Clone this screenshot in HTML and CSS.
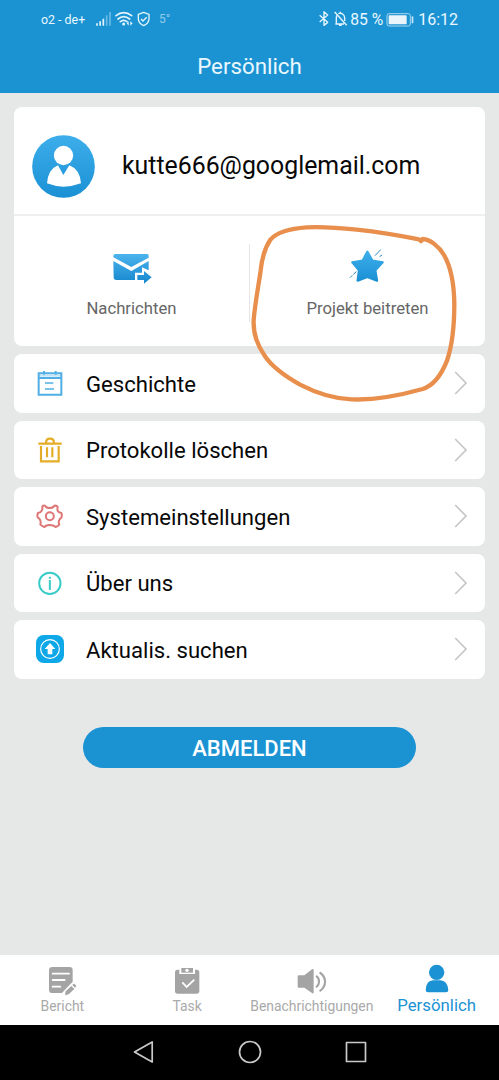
FILE: index.html
```html
<!DOCTYPE html>
<html lang="de">
<head>
<meta charset="utf-8">
<title>Persönlich</title>
<link rel="stylesheet" href="styles.css">
</head>
<body>
<div class="screen">
  <header class="header">
    <div class="status">
      <div class="status-left">
        <span class="carrier">o2 - de+</span>
        <svg class="status-icons" viewBox="285 30 168 54" width="56" height="18" fill="none" stroke="#e3f4fc">
          <g stroke-width="5"><path d="M291 70v7M300.500 64v13M310 56v21"/><path d="M320 46v31M330 36v41" opacity=".4"/></g>
          <g stroke-width="5" stroke-linecap="round"><path d="M348 47Q371 29 395 47M354 57Q371 43 389 57M361 65Q371 57 381 65"/></g>
          <circle cx="371" cy="72" r="4.500" fill="#e3f4fc" stroke="none"/>
          <path d="M386 64l-6 6 6 7zM391 64l7 6-7 7z" fill="#e3f4fc" stroke="none"/>
          <path d="M431 37L447 43V58Q445 71 431 77Q417 71 415 58V43Z" stroke-width="4" stroke-linejoin="round"/>
          <path d="M423 57l6 6 11-11" stroke-width="4"/>
        </svg>
        <span class="temp">5°</span>
      </div>
      <div class="status-right">
        <svg class="bt" viewBox="210 30 90 54" width="30" height="18" fill="none" stroke="#e3f4fc" stroke-width="4.200" stroke-linejoin="round">
          <path d="M215 46L239 67L228 76V35L239 45L215 66"/>
          <path d="M260 36L296 76M262 72H288M265 72V53Q265 49 267 46M271 41Q277 38 284 42Q290 46 290 54V63M277 35V38M273 76H281"/>
        </svg>
        <span class="percent">85 %</span>
        <svg class="battery" viewBox="415 33 84 45" width="28" height="15">
          <rect x="418" y="38" width="70" height="37" rx="6" fill="none" stroke="#a9d6ef" stroke-width="3"/>
          <rect x="423" y="43" width="54" height="27" rx="2" fill="#e9f5fb"/>
          <rect x="492" y="46" width="5" height="21" rx="2" fill="#c6e5f5"/>
        </svg>
        <span class="clock">16:12</span>
      </div>
    </div>
    <h1 class="title">Persönlich</h1>
  </header>

  <main class="content">
    <section class="card profile">
      <div class="account">
        <svg class="avatar" viewBox="96 108 189 189" width="63" height="63">
          <defs><linearGradient id="blue" x1="0" y1="0" x2="0" y2="1"><stop offset="0" stop-color="#3daeeb"/><stop offset="1" stop-color="#1a90d4"/></linearGradient></defs>
          <circle cx="190.500" cy="202.500" r="94" fill="url(#blue)"/>
          <circle cx="190.500" cy="169.500" r="29" fill="#fff"/>
          <path d="M174 199L190 228L208 199Q240 211 243 253Q190 273 141 253Q144 211 174 199Z" fill="#fff"/>
        </svg>
        <span class="email">kutte666@googlemail.com</span>
      </div>
      <div class="actions">
        <div class="action">
          <svg viewBox="333 453 126 102" width="42" height="34">
            <defs><linearGradient id="mail" gradientUnits="userSpaceOnUse" x1="0" y1="460" x2="0" y2="550"><stop offset="0" stop-color="#4db5ee"/><stop offset="1" stop-color="#1687ce"/></linearGradient></defs>
            <g fill="url(#mail)">
              <path d="M346 462H442Q446 462 446 467V473L394 501L340 472V467Q341 462 346 462Z"/>
              <path d="M340 483L394 513L446 483V511L426 502V518H405V540H349Q341 540 341 532Z"/>
              <path d="M412 525H432V513L455 532L432 551V540H412Z"/>
            </g>
          </svg>
          <span class="action-label">Nachrichten</span>
        </div>
        <div class="action">
          <svg viewBox="320 119 126 102" width="42" height="34" overflow="visible">
            <path d="M381 121L396 148L427 153L405 177L410 208L381 197L352 208L356 177L336 153L367 148Z" fill="url(#blue)" stroke="url(#blue)" stroke-width="7" stroke-linejoin="round"/>
            <path d="M404 133L421 115M418 136L425 131M329 199L336 192M339 189L348 181" stroke="#2b86b9" stroke-width="3"/>
          </svg>
          <span class="action-label">Projekt beitreten</span>
        </div>
      </div>
    </section>

    <div class="card row">
      <svg class="row-icon" viewBox="105 85 90 90" width="30" height="30" fill="none" stroke="#50afe5" stroke-width="6">
        <path d="M116 101H184V165H116ZM116 115H184M132 94V105M167 94V105"/><path d="M135 130H160M135 148H162" stroke-width="5"/><path d="M116 108H184" stroke-opacity=".35"/>
      </svg>
      <span class="row-label">Geschichte</span>
      <svg class="chevron" viewBox="0 0 14 24" width="14" height="24"><path d="M1.200 1L12 12L1.200 23"/></svg>
    </div>
    <div class="card row">
      <svg class="row-icon" viewBox="105 285 90 90" width="30" height="30" fill="none" stroke="#e5ad27" stroke-width="6.500">
        <path d="M115 311H185M123 318V364H176V318M141 322V352M157 322V352M138 309Q138 296 150 296Q162 296 162 309"/>
      </svg>
      <span class="row-label">Protokolle löschen</span>
      <svg class="chevron" viewBox="0 0 14 24" width="14" height="24"><path d="M1.200 1L12 12L1.200 23"/></svg>
    </div>
    <div class="card row">
      <svg class="row-icon" viewBox="105 -26 90 90" width="30" height="30" fill="none" stroke="#df7676" stroke-width="6" stroke-linejoin="round">
        <path d="M127 -10Q130 -13 135 -12Q139 -5 149 -5Q159 -5 163 -12Q168 -13 173 -9Q171 1 174 5Q177 9 184 10Q187 17 184 24Q178 28 177 33Q175 39 178 45Q173 51 167 52Q161 46 149 46Q138 46 133 52Q126 50 121 45Q123 37 121 32Q119 26 113 23Q111 17 114 10Q122 8 125 3Q128 -2 127 -10Z"/><circle cx="149.500" cy="20" r="12"/>
      </svg>
      <span class="row-label">Systemeinstellungen</span>
      <svg class="chevron" viewBox="0 0 14 24" width="14" height="24"><path d="M1.200 1L12 12L1.200 23"/></svg>
    </div>
    <div class="card row">
      <svg class="row-icon" viewBox="105 174 90 90" width="30" height="30" fill="none" stroke="#38cbc8" stroke-width="6">
        <circle cx="149.500" cy="220" r="32"/><path d="M149.500 200V206M149.500 210V240"/>
      </svg>
      <span class="row-label">Über uns</span>
      <svg class="chevron" viewBox="0 0 14 24" width="14" height="24"><path d="M1.200 1L12 12L1.200 23"/></svg>
    </div>
    <div class="card row">
      <svg class="row-icon" viewBox="105 373 90 90" width="30" height="30">
        <rect x="108" y="376" width="84" height="84" rx="23" fill="#0ea8e9"/>
        <circle cx="150" cy="418" r="28" fill="none" stroke="#fff" stroke-width="3.500"/>
        <path d="M150 400L166 418H157V434H143V418H134Z" fill="#fff"/>
      </svg>
      <span class="row-label">Aktualis. suchen</span>
      <svg class="chevron" viewBox="0 0 14 24" width="14" height="24"><path d="M1.200 1L12 12L1.200 23"/></svg>
    </div>

    <button class="logout">ABMELDEN</button>

    <svg class="marker" viewBox="0 0 777 600" width="259" height="200">
      <path d="M543 93L537 88Q440 69 350 59Q260 49 200 52Q118 58 92 88Q68 123 62 181C56 225 45 280 41 330C39 370 51 405 75 439C100 476 139 501 180 524C238 554 290 567 335 568C400 571 480 556 548 537C577 528 602 500 621 452C639 400 643 340 643 280C642 220 632 170 612 135C597 109 570 88 548 87Z"/>
    </svg>
  </main>

  <nav class="tabs">
    <div class="tab">
      <svg viewBox="141 75 96 96" width="32" height="32">
        <path d="M160 81H212Q221 81 221 91V126Q216 130 205 142L189 159H160Q150 159 150 149V91Q150 81 160 81Z" fill="#a4a4a4"/>
        <path d="M161 101H210M161 120H197M161 140H184" stroke="#fff" stroke-width="5.500" stroke-linecap="round"/>
        <path d="M198 166L200 154L217 138L226 147L209 163ZM220 135L224 131Q229 132 232 138L228 143Z" fill="#a4a4a4"/>
      </svg>
      <span>Bericht</span>
    </div>
    <div class="tab">
      <svg viewBox="513 75 96 96" width="32" height="32">
        <path d="M533 89H538V102H585V89H590Q598 89 598 97V153Q598 161 590 161H533Q525 161 525 153V97Q525 89 533 89Z" fill="#a4a4a4"/>
        <path d="M544 84H579V98H544Z" fill="#a4a4a4"/><circle cx="561" cy="91" r="5" fill="#fff"/>
        <path d="M547 127L560 141L583 119" fill="none" stroke="#fff" stroke-width="5.500"/>
      </svg>
      <span>Task</span>
    </div>
    <div class="tab">
      <svg viewBox="141 75 96 96" width="32" height="32">
        <path d="M149 106H166L190 87Q194 86 194 91V157Q194 162 190 160L166 143H149Q146 143 146 140V109Q146 106 149 106Z" fill="#a4a4a4"/>
        <path d="M203 109Q210 114 210 125Q210 135 203 140M214 99Q228 109 228 125Q228 141 214 152" fill="none" stroke="#a4a4a4" stroke-width="6.500" stroke-linecap="round"/>
      </svg>
      <span>Benachrichtigungen</span>
    </div>
    <div class="tab active">
      <svg viewBox="514 69 96 96" width="32" height="32" fill="#1a92d3">
        <circle cx="561" cy="97" r="23"/><path d="M528 150Q530 122 550 121H572Q593 122 596 150Q596 157 589 157H535Q528 157 528 150Z"/>
      </svg>
      <span>Persönlich</span>
    </div>
  </nav>

  <footer class="sysnav">
    <svg viewBox="0 0 22 24" width="22" height="24"><path d="M19.200 2V22L1.500 12Z"/></svg>
    <svg viewBox="0 0 24 24" width="24" height="24"><circle cx="12" cy="12" r="10.500"/></svg>
    <svg viewBox="0 0 22 24" width="22" height="24"><rect x="1.500" y="2.500" width="19" height="19"/></svg>
  </footer>
</div>
</body>
</html>
```
FILE: styles.css
```css
* { box-sizing: border-box; }
body { margin: 0; font-family: Roboto, sans-serif; }
svg { display: block; flex: none; }
.screen { width: 499px; height: 1080px; display: flex; flex-direction: column; background: #e6e8e8; overflow: hidden; }
.header { height: 92.5px; flex: none; background: #1b93d3; color: #e9f7fe; }
.status { height: 38px; padding: 0 41px; display: flex; justify-content: space-between; align-items: center; }
.status-left, .status-right { display: flex; align-items: center; white-space: nowrap; }
.carrier { font-size: 12.4px; width: 54px; }
.temp { font-size: 12px; margin-left: 8px; opacity: .55; }
.percent { font-size: 15.7px; width: 36px; margin-left: 2px; }
.clock { font-size: 16px; margin-left: 4px; }
.title { margin: 14px 0 0; font-size: 22.3px; line-height: 28px; font-weight: 400; text-align: center; }
.content { position: relative; flex: 1; padding: 14px 14px 0; display: flex; flex-direction: column; gap: 8.1px; }
.card { background: #fff; border-radius: 8px; flex: none; }
.profile { height: 239.600px; }
.account { height: 109px; padding: 12px 0 0 18px; display: flex; align-items: center; border-bottom: 2px solid #eeefef; }
.email { margin-left: 27px; padding-bottom: 2px; font-size: 24.850px; color: #080808; }
.actions { display: grid; grid-template-columns: 235px 236px; padding-top: 28px; }
.action { height: 78px; display: flex; flex-direction: column; align-items: center; padding-top: 7px; }
.action + .action { border-left: 1px solid #e5e5e5; }
.action-label { margin-top: 14px; font-size: 16.700px; line-height: 20px; color: #666; }
.row { height: 58.400px; display: flex; align-items: center; padding: 0 17px 0 21px; }
.row-label { margin-left: 21px; padding-top: 1px; flex: 1; font-size: 22.100px; line-height: 28px; color: #080808; }
.chevron { fill: none; stroke: #c4c4c4; stroke-width: 1.6; }
.logout { margin: 40px auto 0; width: 333px; height: 41.500px; flex: none; border: 0; border-radius: 21px; padding: 2px 0 0; background: #1b93d3; color: #fff; font: 500 22px Roboto, sans-serif; }
.marker { position: absolute; left: 240px; top: 117.500px; fill: none; stroke: #e98f4d; stroke-width: 13; stroke-linejoin: round; pointer-events: none; }
.tabs { height: 69.500px; flex: none; background: #fff; display: grid; grid-template-columns: repeat(4, 1fr); color: #a9a9a9; font-size: 13.900px; }
.tab { display: flex; flex-direction: column; align-items: center; padding-top: 10px; line-height: 18px; white-space: nowrap; }
.tab.active { color: #1a92d3; font-size: 16.800px; padding-top: 8px; line-height: 20px; }
.sysnav { height: 55.500px; flex: none; background: #000; display: flex; justify-content: center; align-items: center; gap: 83px; }
.sysnav svg { fill: none; stroke: #c9c9c9; stroke-width: 1.700; stroke-linejoin: round; }
```
